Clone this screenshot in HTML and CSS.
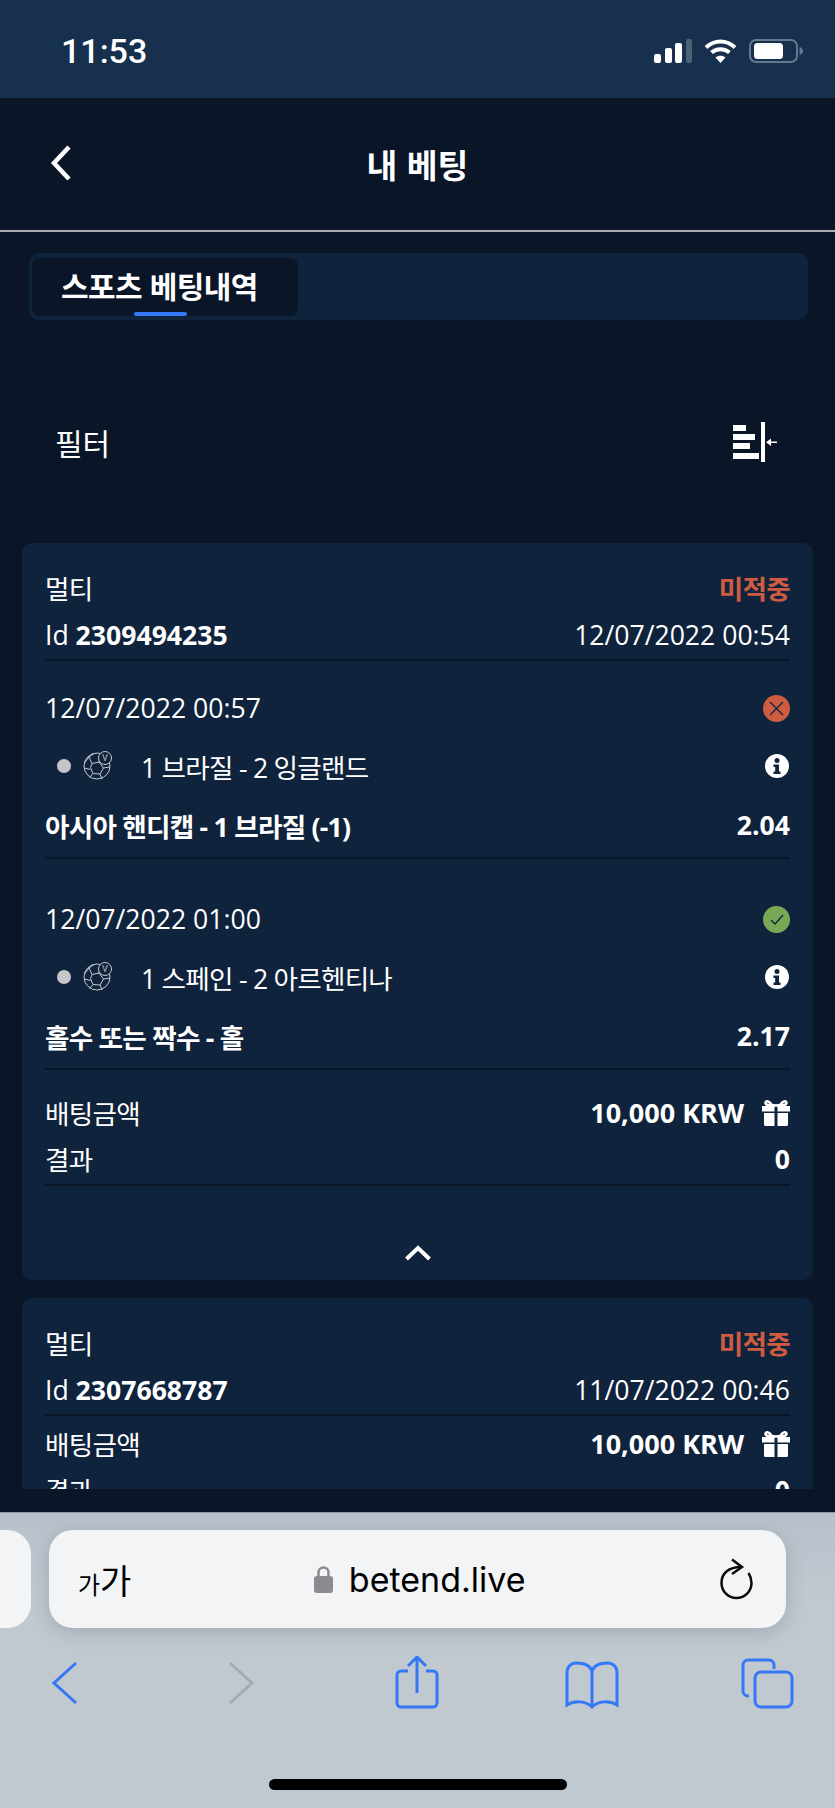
FILE: index.html
```html
<!DOCTYPE html>
<html lang="ko">
<head>
    <meta charset="UTF-8">
    <meta name="viewport" content="width=device-width, initial-scale=1.0">
    <title>내 베팅</title>
    <link rel="stylesheet" href="styles.css">
</head>
<body>
    <svg class="sprite" xmlns="http://www.w3.org/2000/svg">
        <symbol id="ball" viewBox="0 0 30 30">
            <g fill="none" stroke="#c4c8cd" stroke-width="1">
                <circle cx="14" cy="15" r="13"/>
                <path d="M9 12.500l7-1.500 4.500 6-3.500 6-7-.5-2.500-6z"/>
                <path d="M9 12.500L6 6l5-3.500M16 11l1-6M20.500 17l6.500-1M17 23l2 5M10 22.500l-3.500 4M7.500 18.500l-6-1.500M6 6L1.500 12"/>
                <circle cx="22" cy="7" r="6.500" fill="#10233d"/>
            </g>
            <text x="22" y="10" class="ball-v">V</text>
        </symbol>
        <symbol id="info" viewBox="0 0 24 24">
            <circle cx="12" cy="12" r="12" fill="#fff"/>
            <circle cx="12" cy="6.500" r="2.500" fill="#10233d"/>
            <path d="M8.500 10.500h5.500v7h1.500v2.500h-7v-2.500h1.700v-4.500h-1.700z" fill="#10233d"/>
        </symbol>
        <symbol id="gift" viewBox="0 0 28 28">
            <path d="M10 6C6.500 1 3.500 1.500 3.500 4c0 2 3 2.500 10.500 2.500S24.500 6 24.500 4c0-2.500-3-3-6.500 2l-4 .5z" fill="none" stroke="#fff" stroke-width="2.500"/>
            <path d="M0 7h12.500v5.500H0zM15.500 7H28v5.500H15.500zM2 14h10.500v13H3.500A1.500 1.500 0 0 1 2 25.500zM15.500 14H26v11.500a1.500 1.500 0 0 1-1.500 1.500h-9z" fill="#fff"/>
        </symbol>
    </svg>

    <div class="status-bar">
        <span class="clock">11:53</span>
        <div class="status-icons">
            <svg width="38" height="24" viewBox="0 0 38 24">
                <rect x="0" y="15" width="7" height="9" rx="2" fill="#fff"/>
                <rect x="11" y="9" width="7" height="15" rx="2" fill="#fff"/>
                <rect x="21" y="4" width="7" height="20" rx="2" fill="#fff"/>
                <rect x="32" y="0" width="6" height="24" rx="2" fill="#4c6076"/>
            </svg>
            <svg width="33" height="24" viewBox="0 0 33 24">
                <g fill="none" stroke="#fff" stroke-width="4">
                    <path d="M2 8.500C10.500 .5 22.500 .5 31 8.500"/>
                    <path d="M7.500 13.500C12.500 9 20.500 9 25.500 13.500"/>
                </g>
                <path d="M11.500 18.500c3-2.500 7-2.500 10 0l-5 5.500z" fill="#fff"/>
            </svg>
            <svg width="54" height="24" viewBox="0 0 54 24">
                <rect x="1" y="1" width="47" height="22" rx="6" fill="none" stroke="#66788c" stroke-width="2"/>
                <rect x="5" y="4" width="29" height="16" rx="3.500" fill="#fff"/>
                <path d="M50.500 8c2 .5 3.500 2 3.500 4s-1.500 3.500-3.500 4z" fill="#66788c"/>
            </svg>
        </div>
    </div>

    <header class="top-nav">
        <svg class="back-icon" width="24" height="38" viewBox="0 0 24 38">
            <path d="M20 3L5 19l15 16" fill="none" stroke="#fff" stroke-width="4.500"/>
        </svg>
        <h1>내 베팅</h1>
    </header>

    <main class="page">
        <div class="scroller">
            <div class="tabs">
                <div class="tab">스포츠 베팅내역</div>
            </div>

            <div class="filter-row">
                <span>필터</span>
                <svg width="44" height="40" viewBox="0 0 44 40">
                    <g fill="#fff">
                        <rect x="0" y="3" width="13" height="6"/>
                        <rect x="0" y="12" width="22" height="6"/>
                        <rect x="0" y="21" width="17" height="6"/>
                        <rect x="0" y="31" width="26" height="6"/>
                        <rect x="28" y="0" width="4" height="40"/>
                        <rect x="36" y="19.500" width="8" height="1.500"/>
                        <path d="M33 20.200l5-3.700v7.400z"/>
                    </g>
                </svg>
            </div>

            <article class="card">
                <div class="summary">
                    <div class="row"><span class="ko">멀티</span><b class="ko lost">미적중</b></div>
                    <div class="row row-id"><span>Id <b>2309494235</b></span><span>12/07/2022 00:54</span></div>
                </div>

                <section class="leg">
                    <div class="leg-row">
                        <span>12/07/2022 00:57</span>
                        <svg class="result-icon" width="27" height="27" viewBox="0 0 27 27">
                            <circle cx="13.500" cy="13.500" r="13.500" fill="#cd5c41"/>
                            <path d="M7 7l13 13M20 7L7 20" stroke="#10233d" stroke-width="1.300"/>
                        </svg>
                    </div>
                    <div class="leg-row">
                        <div class="teams">
                            <i class="dot"></i>
                            <svg class="ball" width="30" height="30"><use href="#ball"/></svg>
                            <span class="ko">1 브라질 - 2 잉글랜드</span>
                        </div>
                        <svg class="info" width="24" height="24"><use href="#info"/></svg>
                    </div>
                    <div class="market"><b class="ko">아시아 핸디캡 - 1 브라질 (-1)</b><b>2.04</b></div>
                </section>

                <section class="leg">
                    <div class="leg-row">
                        <span>12/07/2022 01:00</span>
                        <svg class="result-icon" width="27" height="27" viewBox="0 0 27 27">
                            <circle cx="13.500" cy="13.500" r="13.500" fill="#7ba857"/>
                            <path d="M8 14l4 4 8-9" fill="none" stroke="#10233d" stroke-width="1.300"/>
                        </svg>
                    </div>
                    <div class="leg-row">
                        <div class="teams">
                            <i class="dot"></i>
                            <svg class="ball" width="30" height="30"><use href="#ball"/></svg>
                            <span class="ko">1 스페인 - 2 아르헨티나</span>
                        </div>
                        <svg class="info" width="24" height="24"><use href="#info"/></svg>
                    </div>
                    <div class="market"><b class="ko">홀수 또는 짝수 - 홀</b><b>2.17</b></div>
                </section>

                <div class="totals">
                    <div class="row row-stake"><span class="ko">배팅금액</span><span class="stake"><b>10,000 KRW</b><svg width="28" height="28"><use href="#gift"/></svg></span></div>
                    <div class="row row-result"><span class="ko">결과</span><b>0</b></div>
                </div>

                <div class="collapse">
                    <svg width="28" height="18" viewBox="0 0 28 18">
                        <path d="M2.500 15L14 4l11.500 11" fill="none" stroke="#fff" stroke-width="4"/>
                    </svg>
                </div>
            </article>

            <article class="card">
                <div class="summary">
                    <div class="row"><span class="ko">멀티</span><b class="ko lost">미적중</b></div>
                    <div class="row row-id"><span>Id <b>2307668787</b></span><span>11/07/2022 00:46</span></div>
                </div>
                <div class="totals">
                    <div class="row row-stake"><span class="ko">배팅금액</span><span class="stake"><b>10,000 KRW</b><svg width="28" height="28"><use href="#gift"/></svg></span></div>
                    <div class="row row-result"><span class="ko">결과</span><b>0</b></div>
                </div>
            </article>
        </div>
    </main>

    <footer class="browser">
        <div class="url-row">
            <div class="prev-tab"></div>
            <div class="url-bar">
                <span class="text-size"><small>가</small>가</span>
                <div class="address">
                    <svg width="19" height="28" viewBox="0 0 19 28">
                        <path d="M4.500 12V7.500a5 5 0 0 1 10 0V12" fill="none" stroke="#8a8a8f" stroke-width="2.500"/>
                        <rect x="0" y="11" width="19" height="17" rx="3" fill="#8a8a8f"/>
                    </svg>
                    <span>betend.live</span>
                </div>
                <svg width="33" height="42" viewBox="0 0 33 42">
                    <g fill="none" stroke="#0b0b0c" stroke-width="2.500">
                        <path d="M21 9C9 9 1.500 15 1.500 25a15 15 0 0 0 30 0c0-4-1-7-3-10"/>
                        <path d="M12 1.500l10 7.500-10 7"/>
                    </g>
                </svg>
            </div>
        </div>

        <nav class="browser-nav">
            <svg width="60" height="60" viewBox="0 0 60 60">
                <path d="M41 7L19 27l22 20" fill="none" stroke="#3478f6" stroke-width="3"/>
            </svg>
            <svg width="60" height="60" viewBox="0 0 60 60">
                <path d="M19 7l22 20-22 20" fill="none" stroke="#a5abb2" stroke-width="3"/>
            </svg>
            <svg width="60" height="60" viewBox="0 0 60 60">
                <g fill="none" stroke="#3478f6" stroke-width="3">
                    <path d="M21 15H14a4 4 0 0 0-4 4v28a4 4 0 0 0 4 4h32a4 4 0 0 0 4-4V19a4 4 0 0 0-4-4h-7"/>
                    <path d="M30 1v36M21 10l9-9 9 9"/>
                </g>
            </svg>
            <svg width="60" height="60" viewBox="0 0 60 60">
                <g fill="none" stroke="#3478f6" stroke-width="3">
                    <path d="M30 15C28 9 21 7 14 7a9 9 0 0 0-9 9v33c8-5 19-4 25 2 6-6 17-7 25-2V16a9 9 0 0 0-9-9c-7 0-14 2-16 8z"/>
                    <path d="M30 15v36"/>
                </g>
            </svg>
            <svg width="60" height="60" viewBox="0 0 60 60">
                <g fill="none" stroke="#3478f6" stroke-width="3">
                    <path d="M11 40H10a5 5 0 0 1-5-5V9a5 5 0 0 1 5-5h21a5 5 0 0 1 5 5v4"/>
                    <rect x="17" y="16" width="37" height="35" rx="6"/>
                </g>
            </svg>
        </nav>

        <div class="home-bar"></div>
    </footer>
</body>
</html>
```

FILE: styles.css
```css
* {
    box-sizing: border-box;
}
html, body {
    margin: 0;
    padding: 0;
}
body {
    width: 835px;
    height: 1808px;
    display: flex;
    flex-direction: column;
    overflow: hidden;
    background-color: #0a1628;
    color: #fff;
    font-family: "Open Sans", "Noto Sans CJK KR", sans-serif;
    font-size: 26.600px;
}
b {
    font-weight: 700;
}
.ko {
    letter-spacing: -0.750px;
}
.sprite {
    display: none;
}
.ball-v {
    font-family: "Open Sans", sans-serif;
    font-size: 9px;
    fill: #c4c8cd;
    text-anchor: middle;
}

/* phone status bar */
.status-bar {
    height: 98px;
    flex: none;
    display: flex;
    align-items: center;
    justify-content: space-between;
    padding: 4px 32px 0 61px;
    background-color: #17304d;
}
.clock {
    font-family: Roboto, sans-serif;
    font-size: 34px;
    font-weight: 500;
}
.status-icons {
    display: flex;
    gap: 12px;
}

/* page title */
.top-nav {
    height: 134px;
    flex: none;
    position: relative;
    display: flex;
    align-items: center;
    justify-content: center;
    border-bottom: 2px solid #a9abaf;
}
.top-nav h1 {
    margin: 0 0 2px;
    font-family: "Noto Sans CJK KR", sans-serif;
    font-size: 33.500px;
    font-weight: 700;
}
.back-icon {
    position: absolute;
    left: 49px;
    top: 46px;
}

.page {
    flex: none;
    height: 1280px;
    padding: 0 22px 23px;
}
.scroller {
    height: 100%;
    overflow: hidden;
}

.tabs {
    height: 67px;
    margin: 21px 5px 0 7px;
    padding: 5px 3px 4px;
    background-color: #10233d;
    border-radius: 10px;
}
.tab {
    width: 266px;
    height: 58px;
    padding: 0 29px 4px;
    position: relative;
    display: flex;
    align-items: center;
    background-color: #0a1628;
    border-radius: 8px;
    font-family: "Noto Sans CJK KR", sans-serif;
    font-size: 30px;
    font-weight: 700;
    letter-spacing: -0.600px;
    white-space: nowrap;
}
.tab::after {
    content: "";
    position: absolute;
    left: 102px;
    bottom: 0;
    width: 53px;
    height: 4px;
    border-radius: 2px;
    background-color: #3478f6;
}

.filter-row {
    height: 223px;
    padding: 20px 36px 0 33px;
    display: flex;
    align-items: center;
    justify-content: space-between;
    font-size: 30px;
}

.card {
    margin-bottom: 18px;
    padding: 22px 23px 0;
    background-color: #10233d;
    border-radius: 10px;
}
.row {
    height: 48px;
    padding-bottom: 4px;
    display: flex;
    align-items: center;
    justify-content: space-between;
}
.row-id {
    height: 46px;
    padding-bottom: 3px;
}
.row-stake {
    height: 45px;
}
.row-result {
    height: 47px;
}
.lost {
    color: #cd5c41;
}
.summary {
    border-bottom: 2px solid #0a1628;
}

.leg {
    margin-bottom: 13px;
    padding-top: 20px;
}
.leg + .leg {
    margin-bottom: 15px;
}
.leg-row {
    height: 58px;
    padding-bottom: 4px;
    display: flex;
    align-items: center;
    justify-content: space-between;
}
.teams {
    display: flex;
    align-items: center;
}
.dot {
    width: 14px;
    height: 14px;
    margin-left: 12px;
    border-radius: 50%;
    background-color: #c4c6ca;
}
.ball {
    margin: 0 28px 0 12px;
}
.info {
    margin-right: 1px;
}
.market {
    height: 62px;
    padding-bottom: 4px;
    display: flex;
    align-items: center;
    justify-content: space-between;
    border-bottom: 2px solid #0a1628;
}

.totals {
    padding-top: 7px;
    border-bottom: 2px solid #0a1628;
}
.stake {
    display: flex;
    align-items: center;
    gap: 18px;
}
.stake b {
    font-size: 27px;
}
.collapse {
    height: 94px;
    padding-top: 40px;
    display: flex;
    align-items: center;
    justify-content: center;
}

/* safari bottom bar */
.browser {
    flex: none;
    height: 296px;
    border-top: 1px solid #8f99a3;
    background: linear-gradient(#b8c1ca, #c0c8d0 30%);
    color: #000;
}
.url-row {
    height: 115px;
    padding-top: 17px;
    display: flex;
    gap: 18px;
}
.prev-tab {
    width: 31px;
    height: 98px;
    background-color: #f2f4f6;
    border-radius: 0 24px 24px 0;
}
.url-bar {
    width: 737px;
    height: 98px;
    padding: 0 33px 0 29px;
    display: flex;
    align-items: center;
    justify-content: space-between;
    background-color: #f2f4f6;
    border-radius: 24px;
    box-shadow: 0 4px 18px rgba(90, 100, 115, 0.3);
}
.text-size {
    font-family: "Noto Sans CJK KR", sans-serif;
    font-size: 34px;
}
.text-size small {
    font-size: 24px;
}
.address {
    margin-right: 12px;
    display: flex;
    align-items: center;
    gap: 16px;
    font-family: Inter, sans-serif;
    font-size: 34px;
}

.browser-nav {
    height: 60px;
    margin-top: 28px;
    padding: 0 37px 0 35px;
    display: flex;
    justify-content: space-between;
}
.home-bar {
    width: 298px;
    height: 11px;
    margin: 63px auto 0;
    border-radius: 6px;
    background-color: #000;
}
```
